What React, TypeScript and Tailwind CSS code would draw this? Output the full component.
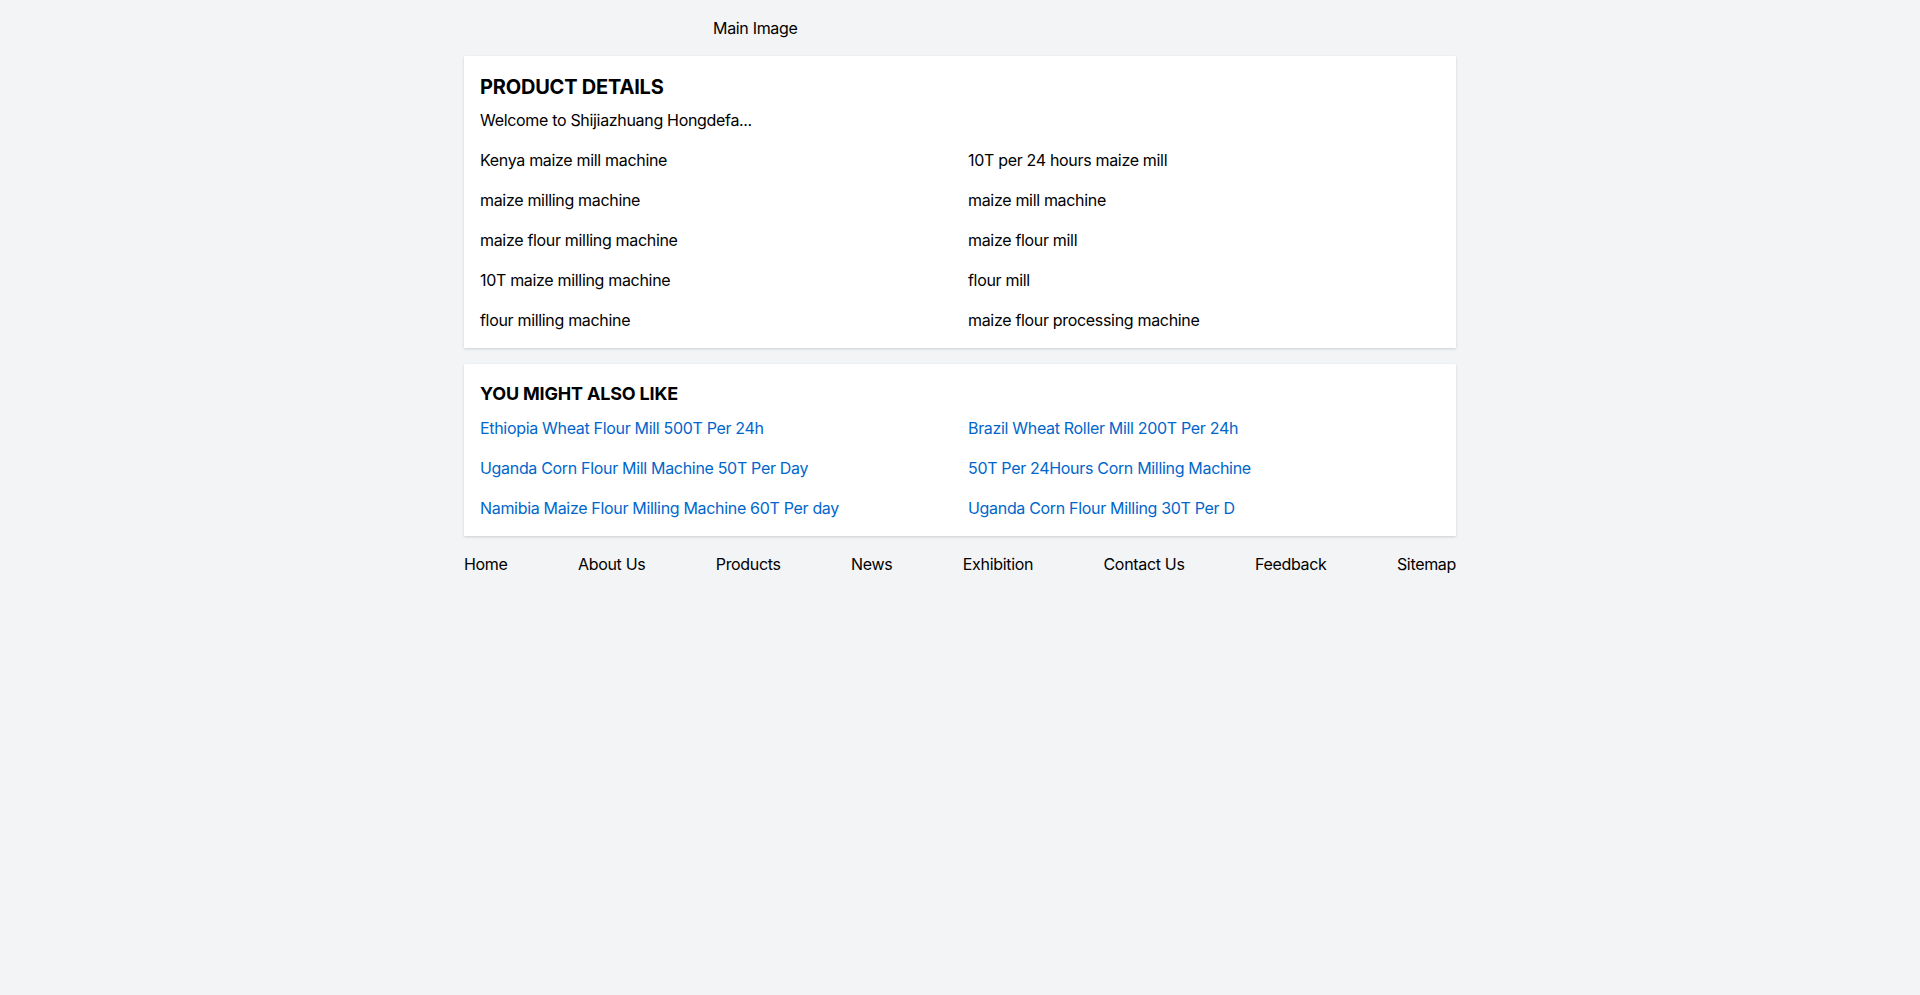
const DETAILS = [
  'Kenya maize mill machine',
  '10T per 24 hours maize mill',
  'maize milling machine',
  'maize mill machine',
  'maize flour milling machine',
  'maize flour mill',
  '10T maize milling machine',
  'flour mill',
  'flour milling machine',
  'maize flour processing machine',
];

const RELATED = [
  'Ethiopia Wheat Flour Mill 500T Per 24h',
  'Brazil Wheat Roller Mill 200T Per 24h',
  'Uganda Corn Flour Mill Machine 50T Per Day',
  '50T Per 24Hours Corn Milling Machine',
  'Namibia Maize Flour Milling Machine 60T Per day',
  'Uganda Corn Flour Milling 30T Per D',
];

const NAV = ['Home', 'About Us', 'Products', 'News', 'Exhibition', 'Contact Us', 'Feedback', 'Sitemap'];

export default function App() {
  return (
    <div className="min-h-screen bg-[#f3f4f6] text-black font-['Inter',sans-serif] text-base tracking-[-0.02em]">
      <div className="max-w-[992px] mx-auto pt-4 pb-8">
        <div className="mb-4 pl-[249px] leading-6">Main Image</div>

        <section className="bg-white p-4 shadow-[0_1px_3px_rgba(0,0,0,0.1),0_1px_2px_rgba(0,0,0,0.06)]">
          <h2 className="text-xl font-bold leading-7 pt-px mb-[7px] tracking-[-0.01em]">PRODUCT DETAILS</h2>
          <p className="leading-6 mb-4">Welcome to Shijiazhuang Hongdefa...</p>
          <div className="grid grid-cols-2 gap-4">
            {DETAILS.map((d) => (
              <div key={d} className="leading-6">{d}</div>
            ))}
          </div>
        </section>

        <section className="bg-white p-4 mt-4 shadow-[0_1px_3px_rgba(0,0,0,0.1),0_1px_2px_rgba(0,0,0,0.06)]">
          <h2 className="text-lg font-bold leading-7 mb-2 tracking-[-0.01em]">YOU MIGHT ALSO LIKE</h2>
          <div className="grid grid-cols-2 gap-4">
            {RELATED.map((r) => (
              <a key={r} href="#" className="leading-6 text-[#0066cc]">{r}</a>
            ))}
          </div>
        </section>

        <nav className="mt-4 flex justify-between leading-6">
          {NAV.map((n) => (
            <a key={n} href="#">{n}</a>
          ))}
        </nav>
      </div>
    </div>
  );
}
